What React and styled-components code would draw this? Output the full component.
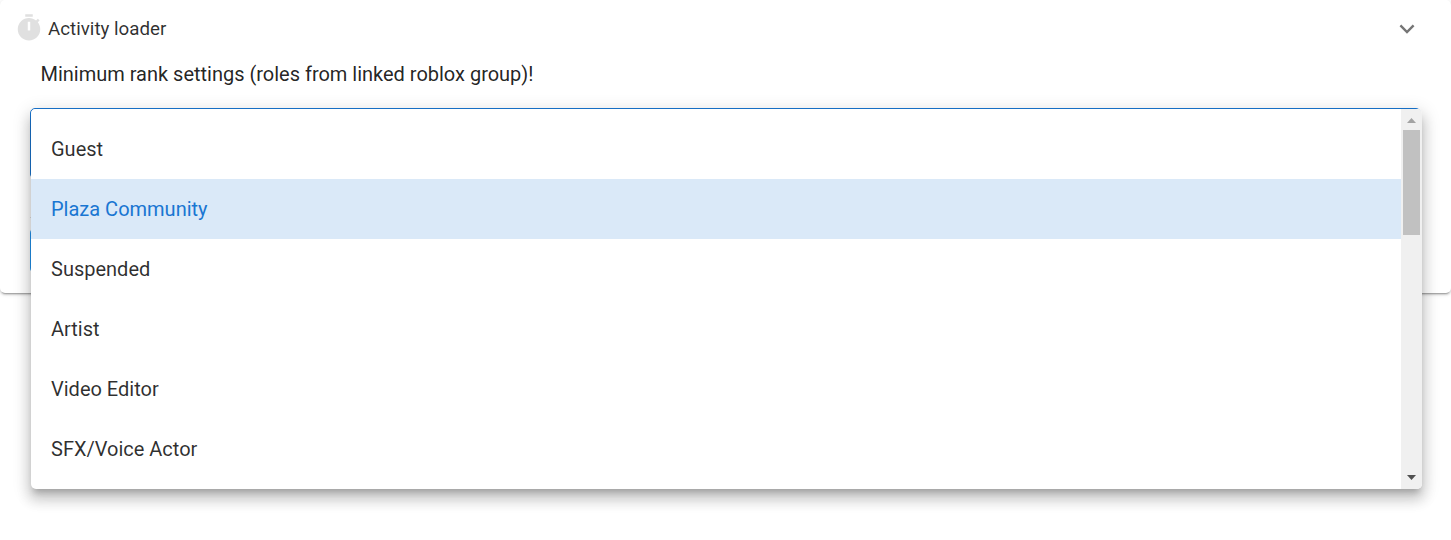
import React from "react";
import styled, { createGlobalStyle } from "styled-components";

const roles = [
  "Guest",
  "Plaza Community",
  "Suspended",
  "Artist",
  "Video Editor",
  "SFX/Voice Actor",
];

const App = () => {
  return (
    <>
      <GlobalStyle />
      <Card>
        <Header>
          <TimerIcon viewBox="0 0 24 24">
            <path d="M19.03 7.39l1.42-1.42c-.45-.51-.9-.97-1.41-1.41L17.62 6C16.07 4.74 14.12 4 12 4a9 9 0 0 0-9 9c0 4.97 4.02 9 9 9 5 0 9-4.03 9-9 0-2.12-.74-4.07-1.97-5.61M13 14h-2V7h2m2-6H9v2h6V1z" />
          </TimerIcon>
          <Title>Activity loader</Title>
          <Chevron viewBox="0 0 16 10">
            <path d="M1.4 1.4 8 8l6.6-6.6" />
          </Chevron>
        </Header>
        <Label>Minimum rank settings (roles from linked roblox group)!</Label>
        <Body>
          <SelectField />
          <Divider />
          <SaveButton />
          <Menu>
            <List>
              {roles.map((role) => (
                <Item key={role} $active={role === "Plaza Community"}>
                  {role}
                </Item>
              ))}
            </List>
            <ScrollBar>
              <Arrow viewBox="0 0 9 5">
                <path d="M0 5 4.5 0 9 5z" fill="#a3a3a3" />
              </Arrow>
              <Thumb />
              <Arrow viewBox="0 0 9 5">
                <path d="M0 0h9L4.5 5z" fill="#505050" />
              </Arrow>
            </ScrollBar>
          </Menu>
        </Body>
      </Card>
    </>
  );
};

export default App;

const GlobalStyle = createGlobalStyle`
  * {
    box-sizing: border-box;
  }
  body {
    margin: 0;
    height: 540px;
    overflow: hidden;
    background-color: #fff;
    font-family: Roboto, sans-serif;
    color: rgba(0, 0, 0, 0.87);
  }
`;

const Card = styled.div`
  height: 293px;
  border-radius: 5px;
  background-color: #fff;
  box-shadow: 0 3px 1px -2px rgba(0, 0, 0, 0.2),
    0 2px 2px 0 rgba(0, 0, 0, 0.14), 0 1px 5px 0 rgba(0, 0, 0, 0.12);
`;

const Header = styled.div`
  display: flex;
  align-items: center;
  height: 57px;
  padding: 0 36px 0 14px;
`;

const TimerIcon = styled.svg`
  width: 30px;
  height: 30px;
  margin: 0 4px 1px 0;
  fill: #e0e0e0;
`;

const Title = styled.div`
  flex: 1;
  font-size: 18.75px;
  line-height: 30px;
  color: rgba(0, 0, 0, 0.82);
`;

const Chevron = styled.svg`
  width: 16px;
  height: 10px;
  fill: none;
  stroke: #757575;
  stroke-width: 2.4;
`;

const Label = styled.div`
  height: 51px;
  padding: 2px 40.5px 0;
  font-size: 20px;
  line-height: 30px;
  letter-spacing: -0.01px;
`;

const Body = styled.div`
  position: relative;
  padding: 0 30px;
`;

const SelectField = styled.div`
  height: 71px;
  border: 1px solid #1976d2;
  border-radius: 5px;
`;

const Divider = styled.div`
  height: 1px;
  margin-top: 38px;
  background-color: #e0e0e0;
`;

const SaveButton = styled.div`
  width: 90px;
  height: 45px;
  margin-top: 10px;
  border-radius: 5px;
  background-color: #2196f3;
`;

const Menu = styled.div`
  position: absolute;
  top: 1px;
  left: 31px;
  display: flex;
  width: 1391px;
  height: 380px;
  overflow: hidden;
  border-radius: 5px;
  background-color: #fff;
  box-shadow: 0 6.25px 6.25px -3.75px rgba(0, 0, 0, 0.2),
    0 10px 12.5px 1.25px rgba(0, 0, 0, 0.14),
    0 3.75px 17.5px 2.5px rgba(0, 0, 0, 0.12);
`;

const List = styled.div`
  flex: 1;
  padding: 10px 0;
`;

const Item = styled.div`
  display: flex;
  align-items: center;
  height: 60px;
  padding: 0 20px;
  font-size: 20px;
  color: ${({ $active }) => ($active ? "#1976d2" : "rgba(0, 0, 0, 0.82)")};
  background-color: ${({ $active }) => ($active ? "#dae9f8" : "transparent")};
`;

const ScrollBar = styled.div`
  display: flex;
  flex-direction: column;
  align-items: center;
  width: 21px;
  padding: 9px 0;
  background-color: #f0f0f0;
`;

const Arrow = styled.svg`
  width: 9px;
  height: 5px;
`;

const Thumb = styled.div`
  width: 17px;
  height: 105px;
  margin: 7px 0 auto;
  background-color: #c1c1c1;
`;
